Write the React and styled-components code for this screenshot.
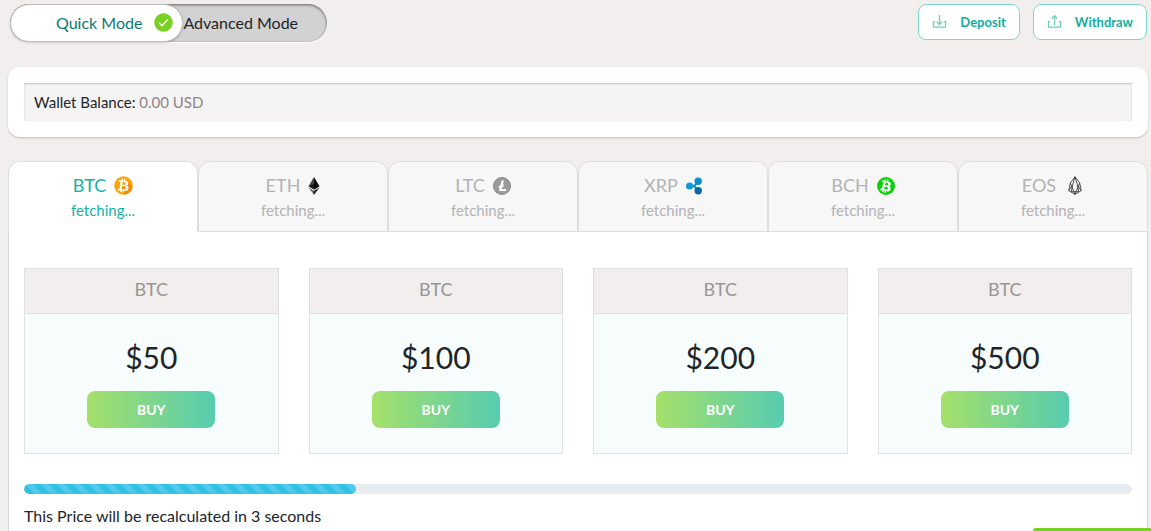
import React from 'react';
import styled, { createGlobalStyle } from 'styled-components';
import { FaBtc } from 'react-icons/fa';

//CSS Settings ---------start---
const GlobalStyle = createGlobalStyle`
	* {
		box-sizing: border-box;
	}
	body {
		margin: 0;
		background: #f2eeed;
		color: #212529;
		font-family: Lato, 'Liberation Sans', sans-serif;
		font-size: 15px;
		line-height: 24px;
	}
	button {
		font-family: inherit;
		cursor: pointer;
	}
`;
const Page = styled.div`
	display: flex;
	flex-direction: column;
	min-height: 100vh;
	padding: 4px 3px 0 8px;
`;
const TopBar = styled.header`
	display: flex;
	justify-content: space-between;
	align-items: flex-start;
	padding-left: 2px;
`;
const ModeSwitch = styled.div`
	display: flex;
	height: 38px;
	border-radius: 19px;
	background: #d2d2d2;
	box-shadow: inset 0 1px 3px rgba(0, 0, 0, 0.55), 0 1px 1px #fff;
`;
const ModeButton = styled.button`
	display: flex;
	align-items: center;
	gap: 12px;
	height: 38px;
	padding: ${(props) => (props.$active ? '0 9px 2px 45px' : '0 29px 2px 0')};
	border: ${(props) => (props.$active ? '1px solid #bdbdbd' : '0')};
	border-radius: 19px;
	background: ${(props) => (props.$active ? '#fff' : 'transparent')};
	box-shadow: ${(props) =>
		props.$active ? '0 1px 2px rgba(0, 0, 0, 0.2)' : 'none'};
	color: ${(props) => (props.$active ? '#0b7a72' : '#212529')};
	font-size: 16px;
`;
const Actions = styled.div`
	display: flex;
	gap: 13px;
	padding-right: 1px;
`;
const ActionButton = styled.button`
	display: flex;
	align-items: center;
	gap: 12px;
	height: 36px;
	padding: 0 13px 0 12px;
	border: 1px solid #7fd6cb;
	border-radius: 8px;
	background: #fff;
	color: #12aea0;
	font-size: 13px;
	font-weight: 700;
`;
const WalletPanel = styled.section`
	margin-top: 25px;
	padding: 16px;
	border-radius: 12px;
	background: #fff;
	box-shadow: 0 1px 2px rgba(0, 0, 0, 0.2);
`;
const WalletBalance = styled.p`
	margin: 0;
	padding: 7px 10px;
	background: #f5f3f4;
	box-shadow: inset 0 1px 2px rgba(0, 0, 0, 0.2);
	span {
		color: #8d8486;
	}
`;
const Tabs = styled.div`
	display: grid;
	grid-template-columns: repeat(6, 1fr);
	margin-top: 24px;
`;
const Tab = styled.button`
	display: flex;
	flex-direction: column;
	align-items: center;
	height: 71px;
	padding: 11px 0 0;
	border: 1px solid #dddddf;
	border-bottom-color: ${(props) => (props.$active ? '#fff' : '#dddddf')};
	border-radius: 12px 12px 0 0;
	background: ${(props) => (props.$active ? '#fff' : '#f7f7f7')};
	color: ${(props) => (props.$active ? '#13b2a4' : '#b3b3b3')};
	font-size: 15px;
	line-height: 24px;
`;
const TabTitle = styled.span`
	display: flex;
	align-items: center;
	gap: 8px;
	font-size: 18px;
	line-height: 25px;
`;
const TabPanel = styled.main`
	flex: 1;
	padding: 36px 15px 0;
	border: solid #d6d6d8;
	border-width: 0 1px;
	background: #fff;
`;
const Cards = styled.div`
	display: grid;
	grid-template-columns: repeat(4, 1fr);
	gap: 30px;
`;
const Card = styled.article`
	border: 1px solid #e0e2e2;
	background: #f7fdfd;
	text-align: center;
`;
const CardHeader = styled.h2`
	margin: 0;
	padding: 8px 0 11px;
	border-bottom: 1px solid #e0e2e2;
	background: #f2eeed;
	color: #969696;
	font-size: 18px;
	font-weight: 400;
	line-height: 25px;
`;
const CardBody = styled.div`
	padding: 23px 0 25px;
`;
const Price = styled.div`
	margin-bottom: 14px;
	font-size: 30px;
	line-height: 40px;
`;
const BuyButton = styled.button`
	width: 128px;
	height: 37px;
	border: 0;
	border-radius: 8px;
	background: linear-gradient(90deg, #a5e06a, #57ccb0);
	color: #fff;
	font-size: 14px;
	font-weight: 700;
`;
const Track = styled.div`
	height: 10px;
	margin: 30px 0 10px;
	border-radius: 5px;
	background: #e9ecef;
	overflow: hidden;
`;
const Bar = styled.div`
	height: 10px;
	border-radius: 5px;
	background: #31c0e4
		linear-gradient(
			45deg,
			rgba(255, 255, 255, 0.15) 25%,
			transparent 25%,
			transparent 50%,
			rgba(255, 255, 255, 0.15) 50%,
			rgba(255, 255, 255, 0.15) 75%,
			transparent 75%
		)
		0 0 / 16px 16px;
`;
const Notice = styled.p`
	margin: 0;
	font-size: 16px;
`;
const ChatTab = styled.div`
	position: fixed;
	right: -12px;
	bottom: 0;
	width: 130px;
	height: 3px;
	border-radius: 4px 4px 0 0;
	background: #78d020;
`;
//CSS Settings ---------end---

const CheckIcon = () => (
	<svg width="19" height="19" viewBox="0 0 19 19" aria-hidden="true">
		<circle cx="9.5" cy="9.5" r="9.3" fill="#78d020" />
		<path d="M5 9.8l3 3 6-6.5" fill="none" stroke="#fff" strokeWidth="1.3" />
	</svg>
);

const TransferIcon = ({ up }) => (
	<svg
		width="17"
		height="16"
		viewBox="0 0 17 16"
		fill="none"
		stroke="#6fd0b4"
		strokeWidth="1.3"
		aria-hidden="true"
	>
		<path d="M4 7.6H2.5v5.6h12V7.6H13" />
		<path
			d={
				up
					? 'M8.5 11V2M5.6 4.6l2.9-2.9 2.9 2.9'
					: 'M8.5 1v9M5.6 7.6l2.9 2.9 2.9-2.9'
			}
		/>
	</svg>
);

const BtcIcon = () => (
	<svg width="19" height="19" viewBox="0 0 20 20" aria-hidden="true">
		<circle cx="10" cy="10" r="9.8" fill="#ffa50a" />
		<path d="M13 5l6.5 6.5a9.8 9.8 0 0 1-8.5 8L6.5 15z" fill="#f28c05" />
		<g transform="rotate(6 10 10)">
			<FaBtc x="2.5" y="2.5" size={15} color="#fff" />
		</g>
	</svg>
);

const EthIcon = () => (
	<svg width="12" height="18" viewBox="0 0 12 18" aria-hidden="true">
		<path d="M6 0L.5 9.2 6 12.4z" fill="#444" />
		<path d="M6 0l5.5 9.2L6 12.4z" fill="#111" />
		<path d="M6 6.7L.5 9.2 6 12.4l5.5-3.2z" fill="#000" opacity="0.6" />
		<path d="M.5 10.5L6 18v-4.2z" fill="#666" />
		<path d="M11.5 10.5L6 18v-4.2z" fill="#222" />
	</svg>
);

const LtcIcon = () => (
	<svg width="18" height="18" viewBox="0 0 18 18" aria-hidden="true">
		<circle cx="9" cy="9" r="8.5" fill="#9b9b9b" stroke="#878787" />
		<path
			d="M9.8 3.5L7.4 13h5.6M5.8 10.3l4.8-2"
			fill="none"
			stroke="#fff"
			strokeWidth="2.2"
		/>
	</svg>
);

const XrpIcon = () => (
	<svg width="16" height="18" viewBox="0 0 16 18" aria-hidden="true">
		<path
			d="M3.6 9H7q1.800 0 2.600-1.600L11.800 4M7 9q1.800 0 2.600 1.600L11.800 14"
			fill="none"
			stroke="#0a86c6"
			strokeWidth="2"
		/>
		<circle cx="3.6" cy="9" r="3.6" fill="#0e9ad8" />
		<circle cx="12.2" cy="4.2" r="3.700" fill="#0b8fcf" />
		<circle cx="12.2" cy="13.800" r="3.700" fill="#0568a8" />
	</svg>
);

const BchIcon = () => (
	<svg width="18" height="18" viewBox="0 0 18 18" aria-hidden="true">
		<circle cx="9" cy="9" r="9" fill="#0ad10a" />
		<g transform="rotate(12 9 9)">
			<FaBtc x="2" y="2" size={14} color="#fff" />
		</g>
	</svg>
);

const EosIcon = () => (
	<svg
		width="20"
		height="19"
		viewBox="-4 0 20 19"
		fill="none"
		stroke="#3d3d3d"
		strokeWidth="0.9"
		aria-hidden="true"
	>
		<path d="M7 .8L2.3 7 .8 14.7 7 18.3l6.2-3.6L11.700 7z" />
		<path d="M7 .8L4.600 9 3.300 15.700M7 .8L9.400 9l1.300 6.700" />
		<path d="M2.300 7L7 18.300 11.700 7M.8 14.700L4.600 9M13.200 14.700L9.400 9M3.300 15.700h7.400" />
	</svg>
);

const coins = [
	{ name: 'BTC', Icon: BtcIcon },
	{ name: 'ETH', Icon: EthIcon },
	{ name: 'LTC', Icon: LtcIcon },
	{ name: 'XRP', Icon: XrpIcon },
	{ name: 'BCH', Icon: BchIcon },
	{ name: 'EOS', Icon: EosIcon },
];
const amounts = [50, 100, 200, 500];

const App = () => {
	const [active, setActive] = React.useState('BTC');
	const progress = 30;

	return (
		<Page>
			<GlobalStyle />
			<TopBar>
				<ModeSwitch>
					<ModeButton type="button" $active>
						Quick Mode
						<CheckIcon />
					</ModeButton>
					<ModeButton type="button">Advanced Mode</ModeButton>
				</ModeSwitch>
				<Actions>
					<ActionButton type="button">
						<TransferIcon />
						Deposit
					</ActionButton>
					<ActionButton type="button">
						<TransferIcon up />
						Withdraw
					</ActionButton>
				</Actions>
			</TopBar>
			<WalletPanel>
				<WalletBalance>
					Wallet Balance: <span>0.00 USD</span>
				</WalletBalance>
			</WalletPanel>
			<Tabs role="tablist">
				{coins.map(({ name, Icon }) => (
					<Tab
						key={name}
						type="button"
						role="tab"
						aria-selected={active === name}
						$active={active === name}
						onClick={() => setActive(name)}
					>
						<TabTitle>
							{name}
							<Icon />
						</TabTitle>
						fetching...
					</Tab>
				))}
			</Tabs>
			<TabPanel>
				<Cards>
					{amounts.map((amount) => (
						<Card key={amount}>
							<CardHeader>{active}</CardHeader>
							<CardBody>
								<Price>{`$${amount}`}</Price>
								<BuyButton type="button">BUY</BuyButton>
							</CardBody>
						</Card>
					))}
				</Cards>
				<Track>
					<Bar style={{ width: `${progress}%` }} />
				</Track>
				<Notice>This Price will be recalculated in 3 seconds</Notice>
			</TabPanel>
			<ChatTab />
		</Page>
	);
};
export default App;
